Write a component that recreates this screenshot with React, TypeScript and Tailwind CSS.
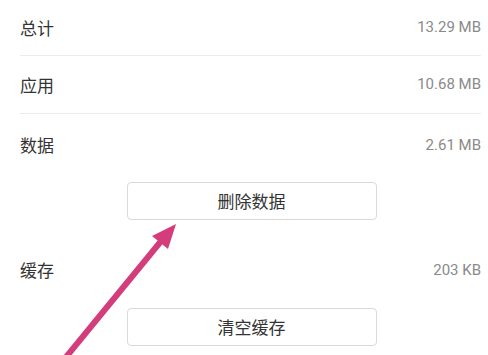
import React from "react";

const Row = ({ label, value, h, divider }: { label: string; value: string; h: string; divider?: boolean }) => (
  <div className={`flex items-center justify-between ${h} ${divider ? "border-b border-[#ebebeb]" : ""}`}>
    <span className="text-[17px] text-[#333333]">{label}</span>
    <span className="text-[15px] text-[#8a8a8a]" style={{ fontFamily: "Roboto, 'Noto Sans', sans-serif" }}>{value}</span>
  </div>
);

const Btn = ({ label }: { label: string }) => (
  <div className="flex justify-center pl-[2px]">
    <div className="w-[250px] h-[38px] flex items-center justify-center border border-[#d9d9d9] rounded-[4px] bg-white text-[17px] text-[#333333]">
      {label}
    </div>
  </div>
);

export default function App() {
  return (
    <div
      className="relative w-[488px] h-[355px] overflow-hidden bg-white pl-[20px] pr-[7px]"
      style={{ fontFamily: "'Noto Sans CJK SC', 'Noto Sans', sans-serif" }}
    >
      <Row label="总计" value="13.29 MB" h="h-[56px]" divider />
      <Row label="应用" value="10.68 MB" h="h-[58px]" divider />
      <Row label="数据" value="2.61 MB" h="h-[62px]" />
      <div className="mt-[6px]">
        <Btn label="删除数据" />
      </div>
      <div className="mt-[20px]">
        <Row label="缓存" value="203 KB" h="h-[60px]" />
      </div>
      <div className="mt-[8px]">
        <Btn label="清空缓存" />
      </div>
      <svg className="absolute left-0 top-0 pointer-events-none" width="488" height="355" viewBox="0 0 488 355">
        <line x1="62" y1="362" x2="162" y2="240" stroke="#d43d7b" strokeWidth="6" strokeLinecap="round" />
        <polygon points="176,224 152,236 168,249" fill="#d43d7b" />
      </svg>
    </div>
  );
}
